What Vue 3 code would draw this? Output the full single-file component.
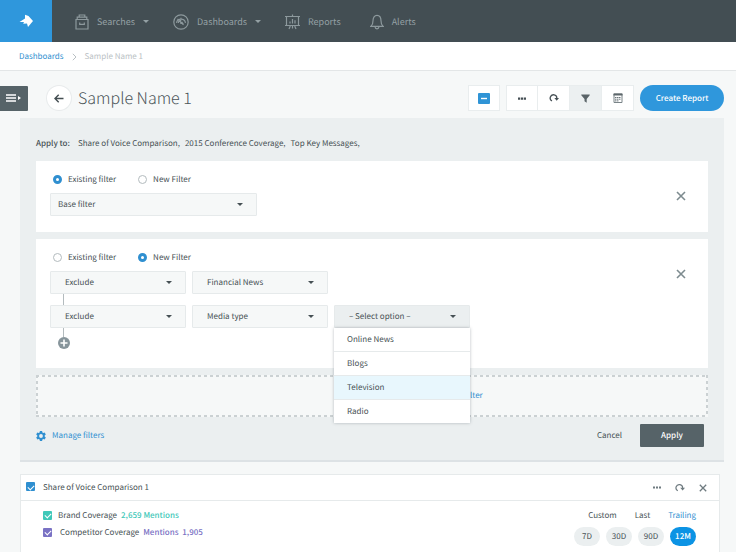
<script setup>
import { ref } from 'vue'

const navItems = [
  { label: 'Searches', icon: 'box', caret: true },
  { label: 'Dashboards', icon: 'gauge', caret: true },
  { label: 'Reports', icon: 'chart', caret: false },
  { label: 'Alerts', icon: 'bell', caret: false },
]
const firstMode = ref('existing')
const secondMode = ref('new')
const mediaTypes = ['Online News', 'Blogs', 'Television', 'Radio']
const mediaType = ref('')
const highlighted = ref('Television')
const menuOpen = ref(true)
const periods = ['7D', '30D', '90D', '12M']
const period = ref('12M')
const ranges = ['Custom', 'Last', 'Trailing']
const range = ref('Trailing')

function pick(name) {
  mediaType.value = name
  highlighted.value = name
  menuOpen.value = false
}
</script>

<template>
  <div class="page">
    <header class="topbar">
      <a href="#" class="logo" aria-label="Home">
        <svg width="14" height="14" viewBox="0 0 14 14"><path d="M6 .8 9.500 2 14 7 9 13 8 9.500 4.200 9.800 5 8 .5 8 6 4.500z" fill="#fff" /></svg>
      </a>
      <nav class="nav">
        <a v-for="item in navItems" :key="item.label" href="#" class="nav-item" :class="{ plain: !item.caret }">
          <svg v-if="item.icon === 'box'" width="14" height="16" viewBox="0 0 14 16" class="line">
            <path d="M1 5.500h12v9.500H1zM2.200 5.500V3.200h9.600v2.300M4.200 3V1h5.600v2M4.700 8.500v1.800h4.600V8.500" />
          </svg>
          <svg v-else-if="item.icon === 'gauge'" width="16" height="16" viewBox="0 0 16 16" class="line">
            <circle cx="8" cy="8" r="7.200" />
            <path d="M3.500 8.800a4.600 4.600 0 0 1 9 0M5.300 9a2.800 2.800 0 0 1 3-2.600M4.500 5l6 5.800M7.300 9.500l1.700-1.200 1.500 2.200M8 3.800v1.600" />
          </svg>
          <svg v-else-if="item.icon === 'chart'" width="15" height="16" viewBox="0 0 15 16" class="line">
            <path d="M0 2.500h15M1.500 2.500v9h12v-9M0 11.500h15M7.500.500v2M5 9.500V7.500M7.500 9.500V5M10 9.500V6.300M5.300 12l-1.300 3M9.700 12l1.300 3M7.500 12v2.500" />
          </svg>
          <svg v-else width="14" height="16" viewBox="0 0 14 16" class="line">
            <path d="M1 12.300c1.600-1.300 2-2.300 2-5.500C3 3.500 4.500 1.300 7 1.300s4 2.200 4 5.500c0 3.200.4 4.200 2 5.500ZM5 12.800c.3 2.700 3.700 2.700 4 0" />
          </svg>
          <span>{{ item.label }}</span>
          <i v-if="item.caret" class="caret"></i>
        </a>
      </nav>
    </header>

    <nav class="crumbs" aria-label="Breadcrumb">
      <a href="#">Dashboards</a>
      <svg width="5" height="8" viewBox="0 0 5 8"><path d="M.8.8 4 4 .8 7.200" fill="none" stroke="#b9c0c3" /></svg>
      <span>Sample Name 1</span>
    </nav>

    <div class="titlebar">
      <button class="drawer" aria-label="Open menu">
        <svg width="16" height="8" viewBox="0 0 16 8"><path d="M0 1h10M0 4h10M0 7h10" stroke="#fff" stroke-width="1.400" /><path d="M12 2l3 2-3 2z" fill="#fff" /></svg>
      </button>
      <button class="back" aria-label="Back">
        <svg width="10" height="9" viewBox="0 0 10 9"><path d="M9.500 4.500H1.200M4.700.8 1 4.500l3.700 3.700" fill="none" stroke="#444e52" stroke-width="1.400" /></svg>
      </button>
      <h1>Sample Name 1</h1>
      <div class="tools">
        <button class="tool single" aria-label="Collapse">
          <svg width="12" height="11" viewBox="0 0 12 11"><rect width="12" height="11" rx="1" fill="#2f94d6" /><path d="M3 5.500h6" stroke="#fff" stroke-width="1.400" /></svg>
        </button>
        <div class="tool-group">
          <button class="tool" aria-label="More">
            <svg width="8" height="3" viewBox="0 0 8 3"><path d="M0 .500h2.200v2.200H0zM2.900.500h2.200v2.200H2.900zM5.800.500H8v2.200H5.800z" fill="#454f54" /></svg>
          </button>
          <button class="tool" aria-label="Refresh">
            <svg width="10" height="10" viewBox="0 0 10 10"><path d="M3 8A3.300 3.300 0 1 1 7.800 5.300" fill="none" stroke="#454f54" stroke-width="1.300" /><path d="M5.400 5H10L7.700 7.800z" fill="#454f54" /></svg>
          </button>
          <button class="tool on" aria-label="Filter">
            <svg width="9" height="9" viewBox="0 0 9 9"><path d="M.3.500h8.400v.8L5.700 5v3.800L3.500 7.300V5L.3 1.300z" fill="#5a6468" /></svg>
          </button>
          <button class="tool" aria-label="Schedule">
            <svg width="10" height="10" viewBox="0 0 10 10"><path d="M1 1h8v8.500H1z" fill="none" stroke="#7a8488" /><path d="M.5.500h9v2h-9z" fill="#5c666a" /><path d="M2 4.500h6M2 6.200h6M2 7.900h3.500" stroke="#6c767a" stroke-dasharray="1.500 .500" /></svg>
          </button>
        </div>
        <button class="create">Create Report</button>
      </div>
    </div>

    <main>
      <section class="filters">
        <p class="apply-to"><b>Apply to:</b><span>Share of Voice Comparison,</span><span>2015 Conference Coverage,</span><span>Top Key Messages,</span></p>

        <div class="card">
          <div class="card-body">
            <div class="radios">
              <label><input v-model="firstMode" type="radio" name="first" value="existing" />Existing filter</label>
              <label><input v-model="firstMode" type="radio" name="first" value="new" />New Filter</label>
            </div>
            <div class="select wide">
              <select aria-label="Filter"><option>Base filter</option></select><i class="caret"></i>
            </div>
          </div>
          <button class="close" aria-label="Remove filter">
            <svg width="10" height="10" viewBox="0 0 10 10"><path d="M1 1l8 8M9 1 1 9" stroke="#7d8b8f" stroke-width="1.600" /></svg>
          </button>
        </div>

        <div class="card tall">
          <div class="card-body">
            <div class="radios">
              <label><input v-model="secondMode" type="radio" name="second" value="existing" />Existing filter</label>
              <label><input v-model="secondMode" type="radio" name="second" value="new" />New Filter</label>
            </div>
            <div class="rule">
              <div class="select"><select aria-label="Condition"><option>Exclude</option></select><i class="caret"></i></div>
              <div class="select"><select aria-label="Category"><option>Financial News</option></select><i class="caret"></i></div>
            </div>
            <div class="link-line"></div>
            <div class="rule">
              <div class="select"><select aria-label="Condition"><option>Exclude</option></select><i class="caret"></i></div>
              <div class="select"><select aria-label="Category"><option>Media type</option></select><i class="caret"></i></div>
              <div class="select open">
                <select v-model="mediaType" aria-label="Media type" @mousedown.prevent="menuOpen = !menuOpen">
                  <option value="">– Select option –</option>
                  <option v-for="name in mediaTypes" :key="name">{{ name }}</option>
                </select>
                <i class="caret"></i>
                <ul v-if="menuOpen" class="menu">
                  <li v-for="name in mediaTypes" :key="name">
                    <button :class="{ active: name === highlighted }" @mouseenter="highlighted = name" @click="pick(name)">{{ name }}</button>
                  </li>
                </ul>
              </div>
            </div>
            <div class="link-line short"></div>
            <button class="add" aria-label="Add rule">
              <svg width="12" height="12" viewBox="0 0 12 12"><circle cx="6" cy="6" r="6" fill="#87959b" /><path d="M6 2.500v7M2.500 6h7" stroke="#fff" stroke-width="1.600" /></svg>
            </button>
          </div>
          <button class="close" aria-label="Remove filter">
            <svg width="10" height="10" viewBox="0 0 10 10"><path d="M1 1l8 8M9 1 1 9" stroke="#7d8b8f" stroke-width="1.600" /></svg>
          </button>
        </div>

        <button class="dropzone">Add another filter</button>

        <div class="actions">
          <a href="#" class="manage">
            <svg width="10" height="10" viewBox="0 0 10 10"><path d="M3.900 0h2.200l.3 1.400.9.500L8.700 1.500l1.100 1.900-1.100 1v1.200l1.100 1-1.100 1.900-1.400-.4-.9.500L6.100 10H3.900l-.3-1.400-.9-.5-1.400.4L.2 6.600l1.100-1V4.400l-1.100-1 1.100-1.900 1.400.4.900-.5zM5 3.100a1.900 1.900 0 1 0 0 3.800 1.900 1.900 0 0 0 0-3.800z" fill="#2f8fd0" fill-rule="evenodd" /></svg>
            Manage filters
          </a>
          <button class="cancel">Cancel</button>
          <button class="apply">Apply</button>
        </div>
      </section>

      <section class="widget">
        <header>
          <label><input type="checkbox" class="blue" checked />Share of Voice Comparison 1</label>
          <div class="widget-tools">
            <button aria-label="More"><svg width="8" height="3" viewBox="0 0 8 3"><path d="M0 .500h2v2H0zM3 .500h2v2H3zM6 .500h2v2H6z" fill="#6f7b80" /></svg></button>
            <button aria-label="Refresh"><svg width="10" height="9" viewBox="0 0 10 9"><path d="M2.800 7.800A3.300 3.300 0 1 1 7.600 5" fill="none" stroke="#6f7b80" stroke-width="1.200" /><path d="M5.200 4.700H10L7.600 7.500z" fill="#6f7b80" /></svg></button>
            <button aria-label="Close"><svg width="8" height="8" viewBox="0 0 8 8"><path d="M.8.8l6.400 6.400M7.200.8.8 7.200" stroke="#6f7b80" stroke-width="1.300" /></svg></button>
          </div>
        </header>
        <div class="widget-body">
          <div class="legend">
            <label><input type="checkbox" class="teal" checked /><span>Brand Coverage</span><b class="teal-text">2,659 Mentions</b></label>
            <label><input type="checkbox" class="violet" checked /><span class="inset">Competitor Coverage</span><b class="violet-text">Mentions&nbsp; 1,905</b></label>
          </div>
          <div class="period">
            <div class="ranges">
              <button v-for="name in ranges" :key="name" :class="{ active: name === range }" @click="range = name">{{ name }}</button>
            </div>
            <div class="pills">
              <button v-for="name in periods" :key="name" :class="{ active: name === period }" @click="period = name">{{ name }}</button>
            </div>
          </div>
        </div>
      </section>
    </main>
  </div>
</template>

<style>
html {
  background: #f6f8f8;
}
body {
  overflow: hidden;
}
</style>

<style scoped>
* {
  box-sizing: border-box;
}
.page {
  font-family: "Noto Sans CJK SC", "Open Sans", sans-serif;
  font-size: 8px;
  line-height: 14px;
  text-rendering: geometricPrecision;
  color: #465054;
  height: 100vh;
  overflow: hidden;
  background: #f6f8f8;
}
button,
select {
  font: inherit;
  text-rendering: inherit;
  color: inherit;
  border: 0;
  padding: 0;
  background: none;
  cursor: pointer;
}
svg {
  display: block;
  flex: none;
}
a {
  text-decoration: none;
}
b {
  font-weight: 500;
}
label {
  display: flex;
  align-items: center;
}
.caret {
  flex: none;
  width: 0;
  height: 0;
  border: 3px solid transparent;
  border-top-color: currentColor;
  border-bottom: 0;
}

.topbar {
  display: flex;
  height: 42px;
  background: #434e53;
}
.logo {
  display: flex;
  align-items: center;
  justify-content: center;
  width: 52px;
  background: #2f97dc;
}
.nav {
  display: flex;
  gap: 24px;
  padding: 1px 0 0 23px;
}
.nav-item {
  display: flex;
  align-items: center;
  gap: 8px;
  color: #94a0a4;
  font-size: 9px;
}
.nav-item.plain {
  padding-right: 5px;
}
.line {
  fill: none;
  stroke: #8d999d;
  stroke-width: 1.2px;
}

.crumbs {
  display: flex;
  align-items: center;
  gap: 8px;
  height: 29px;
  padding: 2px 0 0 19px;
  background: #fff;
  border-bottom: 1px solid #e3e6e7;
  color: #bac1c4;
}
.crumbs a {
  color: #2f8fd0;
}

.titlebar {
  display: flex;
  align-items: center;
  height: 47px;
  padding: 7px 12px 0 0;
}
.drawer {
  display: flex;
  align-items: center;
  justify-content: center;
  width: 28px;
  height: 25px;
  background: #566368;
  border-radius: 0 1px 1px 0;
}
.back {
  display: flex;
  align-items: center;
  justify-content: center;
  width: 24px;
  height: 24px;
  margin: 0 7px 0 19px;
  background: #fff;
  border-radius: 50%;
  box-shadow: 0 0 0 1px #e8ebec;
}
h1 {
  margin: 0;
  font-size: 16px;
  line-height: 24px;
  padding-bottom: 2px;
  font-weight: 300;
  color: #4b5559;
}
.tools {
  display: flex;
  align-items: center;
  margin-left: auto;
}
.tool-group {
  display: flex;
  margin: 0 6px 0 6px;
  border: 1px solid #e9edee;
  background: #fff;
}
.tool {
  display: flex;
  align-items: center;
  justify-content: center;
  width: 30px;
  height: 24px;
  background: #fff;
}
.tool + .tool {
  border-left: 1px solid #e9edee;
  width: 32px;
}
.tool.single {
  width: 32px;
  height: 26px;
  border: 1px solid #e9edee;
}
.tool.on {
  background: #ecf0f1;
}
.create {
  width: 84px;
  height: 26px;
  padding-top: 2px;
  border-radius: 13px;
  background: #2f97dc;
  color: #fff;
  font-weight: 500;
}

main {
  padding: 0 12px 0 20px;
}
.filters {
  display: flex;
  flex-direction: column;
  padding: 19px 16px 13px;
  background: #ebeff0;
  border-bottom: 2px solid #dde2e5;
}
.apply-to {
  display: flex;
  gap: 5px;
  margin: 0 0 10px;
}
.apply-to b {
  margin-right: 3px;
}
.card {
  display: flex;
  justify-content: space-between;
  align-items: flex-start;
  min-height: 71px;
  padding: 12px 22px 11px 14px;
  background: #fff;
}
.card.tall {
  min-height: 129px;
  margin: 7px 0;
}
.close {
  padding: 18px 0 0;
}
.radios {
  display: flex;
  gap: 22px;
  margin-bottom: 6px;
  padding-left: 3px;
}
.radios label {
  gap: 6px;
}
input {
  appearance: none;
  flex: none;
  margin: 0 0 2px;
}
input[type="radio"] {
  width: 9px;
  height: 9px;
  border: 1px solid #b3bbbe;
  border-radius: 50%;
  background: #fff;
}
input[type="radio"]:checked {
  border: 3px solid #2f8fd0;
}
.select {
  position: relative;
  display: flex;
  align-items: center;
  width: 136px;
  height: 23px;
}
.select select {
  appearance: none;
  width: 100%;
  height: 100%;
  padding: 0 24px 0 14px;
  border: 1px solid #e6eaeb;
  border-radius: 1px;
  background: #f6f8f8;
}
.select .caret {
  margin-left: -20px;
  pointer-events: none;
}
.select.wide {
  width: 207px;
}
.select.wide select {
  padding-left: 7px;
}
.select.open select {
  background: #ebeff0;
}
.rule {
  display: flex;
  gap: 6px;
}
.link-line {
  width: 1px;
  height: 11px;
  margin-left: 13px;
  background: #b3bbbe;
}
.link-line.short {
  height: 9px;
}
.add {
  display: block;
  margin-left: 8px;
}
.menu {
  position: absolute;
  z-index: 2;
  top: 100%;
  left: 0;
  width: 100%;
  margin: 0;
  padding: 0;
  list-style: none;
  background: #fff;
  box-shadow: 0 0 3px rgba(60, 75, 82, 0.35);
}
.menu li {
  display: flex;
  border-bottom: 1px solid #e6eaeb;
}
.menu li:last-child {
  border-bottom: 0;
}
.menu button {
  width: 100%;
  height: 23px;
  padding: 0 13px;
  text-align: left;
}
.menu button.active {
  background: #e8f7fd;
}
.dropzone {
  height: 42px;
  padding-left: 156px;
  color: #2f8fd0;
  background:
    repeating-linear-gradient(90deg, #cbd1d3 0 3px, transparent 3px 6px) top / 100% 2px no-repeat,
    repeating-linear-gradient(90deg, #cbd1d3 0 3px, transparent 3px 6px) bottom / 100% 2px no-repeat,
    repeating-linear-gradient(#cbd1d3 0 3px, transparent 3px 6px) left / 2px 100% no-repeat,
    repeating-linear-gradient(#cbd1d3 0 3px, transparent 3px 6px) right / 2px 100% no-repeat,
    #f6f8f8;
}
.actions {
  display: flex;
  align-items: center;
  margin-top: 7px;
  padding-right: 4px;
}
.manage {
  display: flex;
  align-items: center;
  gap: 6px;
  margin-right: auto;
  color: #2f8fd0;
}
.apply {
  width: 64px;
  height: 23px;
  margin-left: 18px;
  border-radius: 1px;
  background: #566368;
  color: #fff;
  font-weight: 500;
}

.widget {
  margin: 12px 4px 0 0;
  border: 1px solid #e6eaeb;
  background: #fff;
}
.widget header {
  display: flex;
  align-items: center;
  justify-content: space-between;
  height: 26px;
  padding: 0 12px 0 5px;
  border-bottom: 1px solid #e6eaeb;
}
.widget header label {
  gap: 8px;
}
.widget-tools {
  display: flex;
  align-items: center;
  gap: 14px;
}
input[type="checkbox"] {
  display: grid;
  place-items: center;
  width: 9px;
  height: 9px;
  border-radius: 1px;
}
input[type="checkbox"]:checked::after {
  content: "";
  width: 5px;
  height: 3px;
  border: solid #fff;
  border-width: 0 0 1px 1px;
  transform: rotate(-45deg);
}
.blue {
  background: #2f8fd0;
}
.teal {
  background: #3fc8b9;
}
.violet {
  background: #7a72c4;
}
.teal-text {
  color: #3fc8b9;
}
.violet-text {
  color: #7a72c4;
}
.widget-body {
  display: flex;
  justify-content: space-between;
  padding: 8px 23px 6px 22px;
}
.legend {
  display: flex;
  flex-direction: column;
  gap: 3px;
}
.legend span {
  margin: 0 4px 0 6px;
}
.legend .inset {
  margin-left: 8px;
}
.period {
  display: flex;
  flex-direction: column;
  gap: 4px;
}
.ranges {
  display: flex;
  justify-content: flex-end;
  gap: 18px;
}
.ranges .active {
  color: #2f8fd0;
}
.pills {
  display: flex;
  gap: 6px;
}
.pills button {
  width: 26px;
  height: 19px;
  padding-top: 1px;
  border-radius: 10px;
  background: #ebeff0;
}
.pills .active {
  background: #0c93e4;
  color: #fff;
  font-weight: 500;
}
</style>
